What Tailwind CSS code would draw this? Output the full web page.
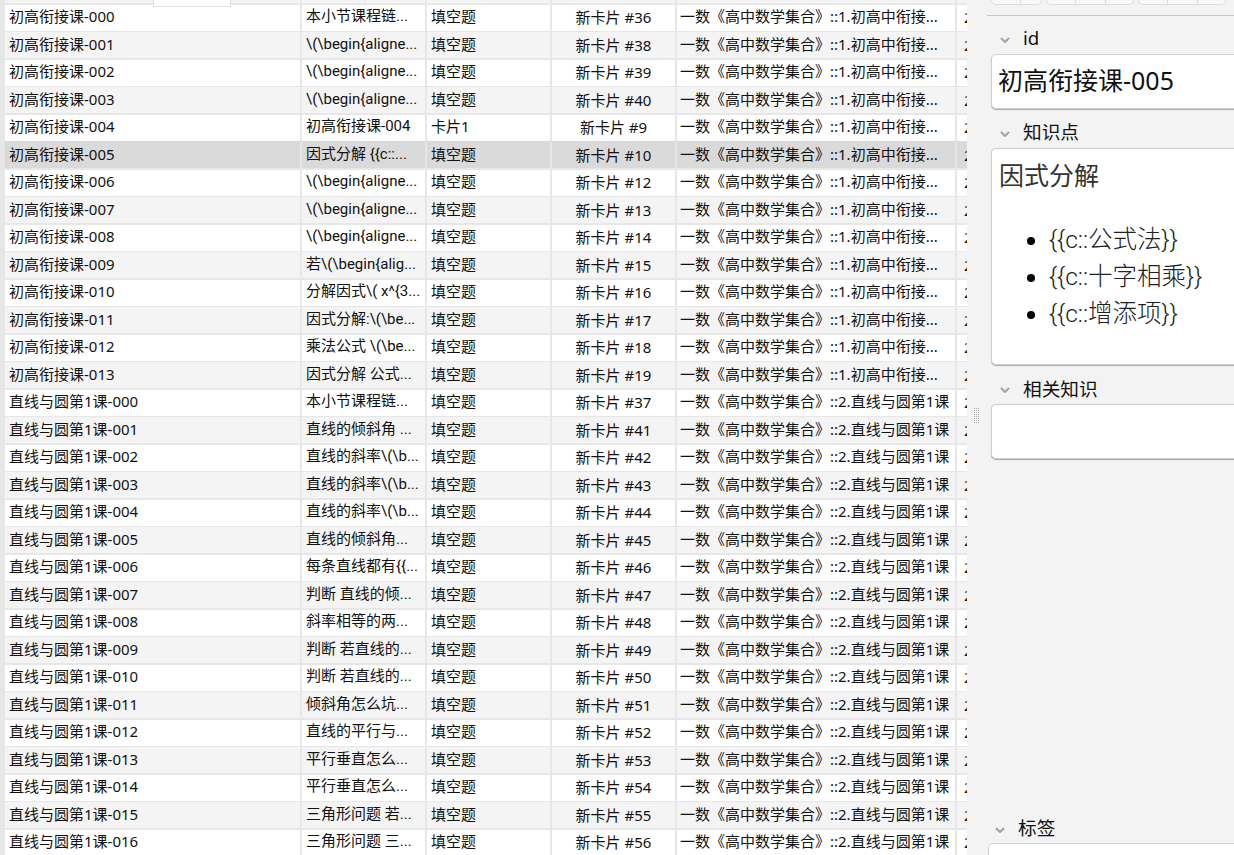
<!DOCTYPE html>
<html lang="zh-CN">
<head>
    <meta charset="UTF-8">
    <title>浏览卡片</title>
    <script src="https://cdn.jsdelivr.net/npm/@tailwindcss/browser@4"></script>
</head>
<body class="h-[855px] w-[1234px] overflow-hidden bg-[#f3f3f3] font-['Noto_Sans','Noto_Sans_CJK_SC',sans-serif] text-[#111]">
    <div class="flex h-[855px]">
        <!-- card table -->
        <div class="relative w-[967px] shrink-0 overflow-hidden bg-[#e7e7e7]">
            <div id="rows" class="-mt-[23px] ml-[5px] flex flex-col gap-y-[1.5px]"></div>
            <div class="absolute left-[153px] top-0 h-[7px] w-[78px] border border-t-0 border-[#e2e2e2] bg-white"></div>
        </div>

        <!-- editor pane -->
        <div class="relative flex h-[855px] w-[267px] shrink-0 flex-col overflow-hidden bg-[#f3f3f3]">
            <div class="ml-[24px] flex h-[5px] gap-x-[4px]">
                <div class="flex w-[51px] rounded-b-[6px] border border-t-0 border-[#dedede] bg-[#f8f8f8]">
                    <div class="w-[29px] border-r border-[#dedede]"></div>
                </div>
                <div class="flex w-[88px] rounded-b-[6px] border border-t-0 border-[#dedede] bg-[#f8f8f8]">
                    <div class="w-[29px] border-r border-[#dedede]"></div>
                    <div class="w-[30px] border-r border-[#dedede]"></div>
                </div>
                <div class="flex w-[88px] rounded-b-[6px] border border-t-0 border-[#dedede] bg-[#f8f8f8]">
                    <div class="w-[29px] border-r border-[#dedede]"></div>
                    <div class="w-[30px] border-r border-[#dedede]"></div>
                </div>
            </div>
            <div class="ml-[20px] mt-[10px] h-px bg-[#c6c6c6]"></div>

            <!-- id -->
            <div class="ml-[33px] mt-[8px] flex h-[29px] items-center gap-x-[13px] text-[18.67px] leading-none">
                <svg class="mt-[2px] h-[6px] w-[10px] text-[#a3a3a3]" viewBox="0 0 10 6" fill="none" stroke="currentColor" stroke-width="2"><path d="M1 1l4 4 4-4"/></svg>
                <span>id</span>
            </div>
            <div class="ml-[24px] mt-px flex h-[55px] w-[280px] shrink-0 items-center rounded-[5px] border border-[#cfcfcf] bg-white pb-[2px] pl-[6px] text-[25px] shadow-[0_1px_1px_#a8a8a8]">初高衔接课-005</div>

            <!-- 知识点 -->
            <div class="ml-[33px] mt-[9px] flex h-[29px] items-center gap-x-[13px] text-[18.67px] leading-none">
                <svg class="mt-[2px] h-[6px] w-[10px] text-[#a3a3a3]" viewBox="0 0 10 6" fill="none" stroke="currentColor" stroke-width="2"><path d="M1 1l4 4 4-4"/></svg>
                <span>知识点</span>
            </div>
            <div class="ml-[24px] mt-px h-[217px] w-[280px] shrink-0 rounded-[5px] border border-[#cfcfcf] bg-white pl-[7px] pt-[8px] text-[25px] leading-[37px] text-[#333] shadow-[0_1px_1px_#a8a8a8]">
                <div>因式分解</div>
                <ul class="mt-[27px] list-disc pl-[50px] font-['Roboto','Noto_Sans_CJK_SC',sans-serif] text-[24.5px] font-light text-[#222] marker:text-black">
                    <li>{{c::公式法}}</li>
                    <li>{{c::十字相乘}}</li>
                    <li>{{c::增添项}}</li>
                </ul>
            </div>

            <!-- 相关知识 -->
            <div class="ml-[33px] mt-[9px] flex h-[30px] items-center gap-x-[13px] text-[18.67px] leading-none">
                <svg class="mt-[2px] h-[6px] w-[10px] text-[#a3a3a3]" viewBox="0 0 10 6" fill="none" stroke="currentColor" stroke-width="2"><path d="M1 1l4 4 4-4"/></svg>
                <span>相关知识</span>
            </div>
            <div class="ml-[24px] h-[55px] w-[280px] shrink-0 rounded-[5px] border border-[#cfcfcf] bg-white shadow-[0_1px_1px_#a8a8a8]"></div>

            <!-- 标签 -->
            <div class="ml-[28px] mt-auto flex h-[29px] items-center gap-x-[13px] text-[18.67px] leading-none">
                <svg class="mt-[2px] h-[6px] w-[10px] text-[#a3a3a3]" viewBox="0 0 10 6" fill="none" stroke="currentColor" stroke-width="2"><path d="M1 1l4 4 4-4"/></svg>
                <span>标签</span>
            </div>
            <div class="ml-[21px] h-[12px] w-[280px] shrink-0 rounded-t-[5px] border border-b-0 border-[#cfcfcf] bg-white"></div>

            <!-- splitter grip -->
            <div class="absolute left-[7px] top-[408px] grid grid-cols-3 gap-[1px]">
                <i class="size-[1px] bg-[#aaa]"></i><i class="size-[1px] bg-[#aaa]"></i><i class="size-[1px] bg-[#aaa]"></i>
                <i class="size-[1px] bg-[#aaa]"></i><i class="size-[1px] bg-[#aaa]"></i><i class="size-[1px] bg-[#aaa]"></i>
                <i class="size-[1px] bg-[#aaa]"></i><i class="size-[1px] bg-[#aaa]"></i><i class="size-[1px] bg-[#aaa]"></i>
                <i class="size-[1px] bg-[#aaa]"></i><i class="size-[1px] bg-[#aaa]"></i><i class="size-[1px] bg-[#aaa]"></i>
                <i class="size-[1px] bg-[#aaa]"></i><i class="size-[1px] bg-[#aaa]"></i><i class="size-[1px] bg-[#aaa]"></i>
                <i class="size-[1px] bg-[#aaa]"></i><i class="size-[1px] bg-[#aaa]"></i><i class="size-[1px] bg-[#aaa]"></i>
                <i class="size-[1px] bg-[#aaa]"></i><i class="size-[1px] bg-[#aaa]"></i><i class="size-[1px] bg-[#aaa]"></i>
                <i class="size-[1px] bg-[#aaa]"></i><i class="size-[1px] bg-[#aaa]"></i><i class="size-[1px] bg-[#aaa]"></i>
            </div>
        </div>
    </div>

    <script>
        const begin = "\\(\\begin{aligne...";
        const slope = "直线的斜率\\(\\b...";
        const first = [
            ["本小节课程链...", 36], [begin, 38], [begin, 39], [begin, 40], ["初高衔接课-004", 9],
            ["因式分解 {{c::...", 10], [begin, 12], [begin, 13], [begin, 14], ["若\\(\\begin{alig...", 15],
            ["分解因式\\( x^{3...", 16], ["因式分解:\\(\\be...", 17], ["乘法公式 \\(\\be...", 18], ["因式分解 公式...", 19]
        ];
        const second = [
            ["本小节课程链...", 37], ["直线的倾斜角 ...", 41], [slope, 42], [slope, 43], [slope, 44],
            ["直线的倾斜角...", 45], ["每条直线都有{{...", 46], ["判断 直线的倾...", 47], ["斜率相等的两...", 48],
            ["判断 若直线的...", 49], ["判断 若直线的...", 50], ["倾斜角怎么坑...", 51], ["直线的平行与...", 52],
            ["平行垂直怎么...", 53], ["平行垂直怎么...", 54], ["三角形问题 若...", 55], ["三角形问题 三...", 56]
        ];

        function pad(n) {
            return String(n).padStart(3, "0");
        }

        function row(cells, index) {
            let bg = index % 2 ? "bg-[#f4f4f4]" : "bg-white";
            let size = "h-[26px]";
            if (index === 5) {
                // selected row reaches one pixel up over the separator
                bg = "bg-[#dadada]";
                size = "h-[27px] -mt-px border-t border-[#dadada]";
            }
            const cols = [
                "pl-[4px] pb-[2px]",
                "pl-[4px] pb-[2px] font-['Roboto','Noto_Sans_CJK_SC',sans-serif]",
                "pl-[4px] pb-[2px]",
                "justify-center",
                "pl-[3px] pb-[2px]",
                "pl-[7px]"
            ];
            const html = cells.map((text, i) =>
                `<div class="${bg} ${cols[i]} flex items-center overflow-hidden whitespace-nowrap">${text}</div>`
            ).join("");
            return `<div class="${size} grid grid-cols-[295px_123px_123px_123px_278px_10px] gap-x-[2px] text-[15px] leading-none">${html}</div>`;
        }

        let html = row(["", "", "", "", "", ""], 1);
        first.forEach((item, i) => {
            const type = i === 4 ? "卡片1" : "填空题";
            html += row([`初高衔接课-${pad(i)}`, item[0], type, `新卡片 #${item[1]}`, "一数《高中数学集合》::1.初高中衔接...", "2"], i);
        });
        second.forEach((item, i) => {
            html += row([`直线与圆第1课-${pad(i)}`, item[0], "填空题", `新卡片 #${item[1]}`, "一数《高中数学集合》::2.直线与圆第1课", "2"], i + 14);
        });
        document.getElementById("rows").innerHTML = html;
    </script>
</body>
</html>
